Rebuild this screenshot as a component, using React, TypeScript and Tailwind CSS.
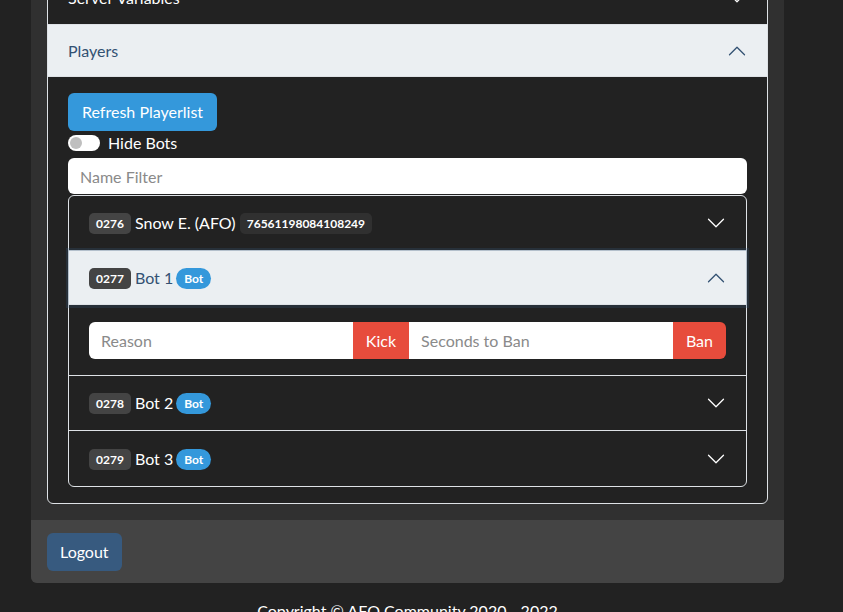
import React, { useState } from 'react';

const font = "font-['Lato','Noto_Sans',sans-serif]";

interface Player {
  id: string;
  name: string;
  steamId?: string;
  bot: boolean;
}

const players: Player[] = [
  { id: '0276', name: 'Snow E. (AFO)', steamId: '76561198084108249', bot: false },
  { id: '0277', name: 'Bot 1', bot: true },
  { id: '0278', name: 'Bot 2', bot: true },
  { id: '0279', name: 'Bot 3', bot: true },
];

const Chevron: React.FC<{ open?: boolean; color: string }> = ({ open, color }) => (
  <svg
    viewBox="0 0 16 16"
    className={`w-5 h-5 shrink-0 ml-auto ${open ? 'rotate-180' : ''}`}
    fill="none"
    stroke={color}
    strokeLinecap="round"
    strokeLinejoin="round"
  >
    <path d="M2 5L8 11L14 5" />
  </svg>
);

const PlayerRow: React.FC<{ p: Player; open: boolean; first: boolean; last: boolean; onToggle: () => void }> = ({
  p,
  open,
  first,
  last,
  onToggle,
}) => (
  <div className={`${first ? '' : 'border-t border-[#dee2e6]'}`}>
    <button
      onClick={onToggle}
      className={`w-full flex items-center px-5 text-left ${last ? 'h-[55px]' : 'h-[54px]'} ${
        open
          ? 'relative z-10 bg-[#ebeff2] text-[#325172] shadow-[inset_0_-1px_0_#dee2e6,0_0_0_3px_rgba(55,90,127,0.25)]'
          : 'text-white'
      } ${first ? 'rounded-t-[5px]' : ''} ${last && !open ? 'rounded-b-[5px]' : ''}`}
    >
      <span className="leading-[24px]">
        <span className="inline-block align-[1px] rounded-[5px] bg-[#444] px-[7px] py-[3px] text-[12px] font-bold leading-[15px] text-white">
          {p.id}
        </span>{' '}
        {p.name}
        {p.bot ? (
          <span className="ml-[3px] inline-block align-[1px] rounded-full bg-[#3498db] px-[8px] py-[3px] text-[12px] font-bold leading-[15px] text-white">
            Bot
          </span>
        ) : (
          <>
            {' '}
            <span className="inline-block align-[1px] rounded-[5px] bg-[#303030] px-[7px] py-[3px] text-[12px] font-bold leading-[15px] text-white">
              {p.steamId}
            </span>
          </>
        )}
      </span>
      <Chevron open={open} color={open ? '#325172' : '#ffffff'} />
    </button>
    {open && (
      <div className="px-5 pt-[17px] pb-4">
        <div className="flex h-[37px]">
          <input
            placeholder="Reason"
            className="flex-1 min-w-0 rounded-l-[6px] bg-white px-3 text-[16px] text-[#222] placeholder:text-[#8a8a8a] outline-none"
          />
          <button className="bg-[#e74c3c] px-[13px] text-white">Kick</button>
          <input
            placeholder="Seconds to Ban"
            className="flex-1 min-w-0 bg-white px-3 text-[16px] text-[#222] placeholder:text-[#8a8a8a] outline-none"
          />
          <button className="rounded-r-[6px] bg-[#e74c3c] px-[13px] text-white">Ban</button>
        </div>
      </div>
    )}
  </div>
);

export default function App() {
  const [openId, setOpenId] = useState<string | null>('0277');
  const [hideBots, setHideBots] = useState(false);
  const [filter, setFilter] = useState('');

  const shown = players.filter(
    (p) => (!hideBots || !p.bot) && p.name.toLowerCase().includes(filter.toLowerCase())
  );

  return (
    <div className={`min-h-screen overflow-hidden bg-[#222] ${font} text-[16px] text-white`}>
      <div className="pl-[31px] w-[784px]">
        <div className="-mt-[46px] rounded-[6px] bg-[#303030]">
          <div className="p-4">
            <div className="rounded-[6px] border border-[#dee2e6] bg-[#222]">
              {/* Server Variables (collapsed) */}
              <button className="w-full h-[53px] flex items-center px-5 text-left text-white">
                <span>Server Variables</span>
                <Chevron color="#ffffff" />
              </button>

              {/* Players (expanded) */}
              <div className="border-t border-[#dee2e6]">
                <button className="w-full h-[52px] flex items-center px-5 text-left bg-[#ebeff2] text-[#325172] shadow-[inset_0_-1px_0_#dee2e6]">
                  <span>Players</span>
                  <Chevron open color="#325172" />
                </button>
                <div className="px-5 pt-4 pb-4">
                  <button className="h-[38px] rounded-[6px] bg-[#3498db] px-[14px] text-white">Refresh Playerlist</button>
                  <label className="mt-[2px] flex items-center gap-2 h-[20px]">
                    <button
                      onClick={() => setHideBots(!hideBots)}
                      className={`flex h-[16px] w-[32px] items-center rounded-full px-[2px] ${
                        hideBots ? 'justify-end bg-[#375a7f]' : 'bg-white'
                      }`}
                    >
                      <span className={`h-[12px] w-[12px] rounded-full ${hideBots ? 'bg-white' : 'bg-[#bfbfbf]'}`} />
                    </button>
                    <span>Hide Bots</span>
                  </label>
                  <input
                    value={filter}
                    onChange={(e) => setFilter(e.target.value)}
                    placeholder="Name Filter"
                    className="mt-[5px] block h-[36px] w-full rounded-[6px] bg-white px-3 text-[16px] text-[#222] placeholder:text-[#8a8a8a] outline-none"
                  />
                  <div className="mt-px rounded-[6px] border border-[#dee2e6]">
                    {shown.map((p, i) => (
                      <PlayerRow
                        key={p.id}
                        p={p}
                        open={openId === p.id}
                        first={i === 0}
                        last={i === shown.length - 1}
                        onToggle={() => setOpenId(openId === p.id ? null : p.id)}
                      />
                    ))}
                  </div>
                </div>
              </div>
            </div>
          </div>
          <div className="rounded-b-[6px] bg-[#444] px-4 pt-[13px] pb-[12px]">
            <button className="h-[38px] rounded-[6px] bg-[#375a7f] px-[13px] text-white">Logout</button>
          </div>
        </div>
        <p className="mt-[16px] text-center text-[16px]">Copyright © AFO Community 2020 - 2022</p>
      </div>
    </div>
  );
}
